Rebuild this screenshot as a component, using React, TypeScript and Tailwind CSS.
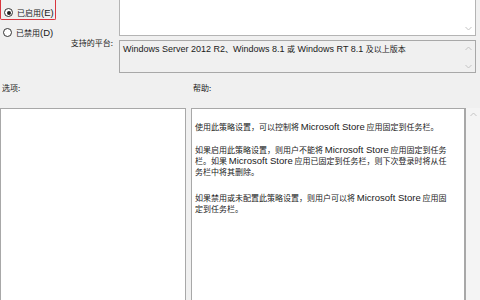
import React from 'react';

const CJK = "font-['Noto_Sans_CJK_SC',sans-serif]";

function Latin({ children, small }: { children: React.ReactNode; small?: boolean }) {
  return (
    <span className={`font-['Liberation_Sans','Noto_Sans_CJK_SC',sans-serif] ${small ? 'text-[9px]' : 'text-[9.5px]'}`}>
      {children}
    </span>
  );
}

function Radio({ checked }: { checked?: boolean }) {
  return (
    <span className="w-[9px] h-[9px] rounded-full border border-[#333] bg-white flex items-center justify-center shrink-0">
      {checked && <span className="w-[4px] h-[4px] rounded-full bg-[#222]" />}
    </span>
  );
}

function Chevron({ up }: { up?: boolean }) {
  return (
    <svg width="7" height="5" viewBox="0 0 7 5" className="text-[#c4c4c4]">
      <path d={up ? 'M0.5 4 L3.5 1 L6.5 4' : 'M0.5 1 L3.5 4 L6.5 1'} fill="none" stroke="currentColor" strokeWidth="1" />
    </svg>
  );
}

export default function App() {
  return (
    <div className={`w-[480px] h-[300px] bg-[#f0f0f0] overflow-hidden text-[8px] leading-[11px] text-[#1a1a1a] ${CJK}`}>
      {/* top section */}
      <div className="flex">
        <div className="w-[119px] flex flex-col">
          <div className="w-[56px] h-[20px] border border-t-0 border-[#d9363e] rounded-b-[2px] flex items-center gap-[4px] pl-[3px] pt-[6px]">
            <Radio checked />
            <span>已启用<Latin>(E)</Latin></span>
          </div>
          <div className="flex items-center gap-[4px] pl-[3px] mt-[7px]">
            <Radio />
            <span>已禁用<Latin>(D)</Latin></span>
          </div>
          <div className="self-end pr-[6px] mt-[-1px]">支持的平台:</div>
        </div>
        <div className="flex-1 flex flex-col mr-[4px]">
          <div className="h-[36px] bg-white border border-t-0 border-[#b4b4b4] flex flex-col items-end justify-end pr-[3px] pb-[4px]">
            <Chevron />
          </div>
          <div className="h-[33px] mt-[4px] bg-[#f0f0f0] border border-[#a8a8a8] flex justify-between pl-[3px] pr-[3px] pt-[2px]">
            <span className="whitespace-nowrap">
              <Latin small>Windows Server 2012 R2</Latin>、<Latin small>Windows 8.1 </Latin>或<Latin small> Windows RT 8.1 </Latin>及以上版本
            </span>
            <div className="flex flex-col justify-between pt-[3px] pb-[3px]">
              <Chevron up />
              <Chevron />
            </div>
          </div>
        </div>
      </div>

      {/* labels */}
      <div className="flex mt-[9px]">
        <div className="w-[192px] pl-[2px]">选项:</div>
        <div className="pl-[1px]">帮助:</div>
      </div>

      {/* panels */}
      <div className="flex mt-[15px] h-[200px]">
        <div className="w-[186px] bg-white border border-[#a8a8a8]" />
        <div className="w-[275px] ml-[5px] bg-white border border-[#a8a8a8] border-r-[2px] pl-[3px] pt-[12px]">
          <div className="whitespace-nowrap">使用此策略设置，可以控制将 <Latin>Microsoft Store</Latin> 应用固定到任务栏。</div>
          <div className="whitespace-nowrap mt-[12px]">如果启用此策略设置，则用户不能将 <Latin>Microsoft Store</Latin> 应用固定到任务</div>
          <div className="whitespace-nowrap">栏。如果 <Latin>Microsoft Store</Latin> 应用已固定到任务栏，则下次登录时将从任</div>
          <div className="whitespace-nowrap">务栏中将其删除。</div>
          <div className="whitespace-nowrap mt-[15px]">如果禁用或未配置此策略设置，则用户可以将 <Latin>Microsoft Store</Latin> 应用固</div>
          <div className="whitespace-nowrap">定到任务栏。</div>
        </div>
        <div className="flex-1 bg-[#f4f4f4] flex justify-center pt-[4px]">
          <Chevron up />
        </div>
      </div>
    </div>
  );
}
